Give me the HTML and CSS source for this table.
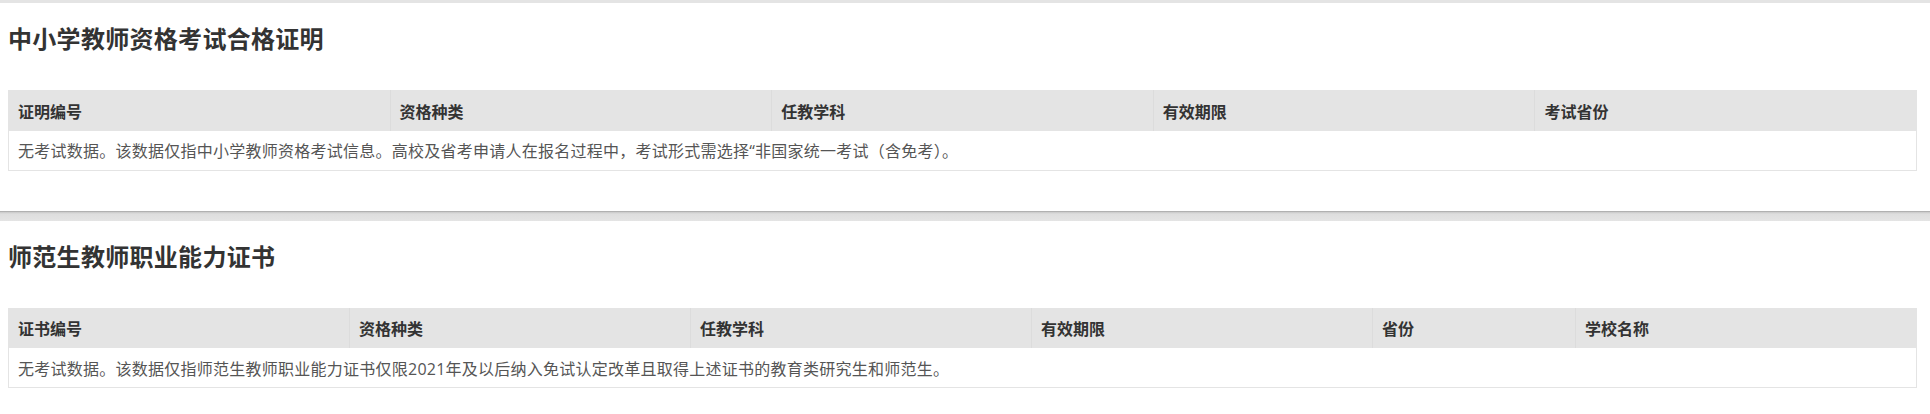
FILE: index.html
```html
<!DOCTYPE html>
<html lang="zh-CN">
<head>
    <meta charset="UTF-8">
    <meta name="viewport" content="width=device-width, initial-scale=1.0">
    <title>证书信息</title>
    <link rel="stylesheet" href="styles.css">
</head>
<body>
    <div class="band band-top"></div>

    <!-- 中小学教师资格考试 -->
    <div class="section">
        <h2 class="section-title">中小学教师资格考试合格证明</h2>
        <table class="cert-table">
            <thead>
                <tr>
                    <th class="col-five">证明编号</th>
                    <th class="col-five">资格种类</th>
                    <th class="col-five">任教学科</th>
                    <th class="col-five">有效期限</th>
                    <th class="col-five">考试省份</th>
                </tr>
            </thead>
            <tbody>
                <tr>
                    <td colspan="5">无考试数据。该数据仅指中小学教师资格考试信息。高校及省考申请人在报名过程中，考试形式需选择“非国家统一考试（含免考）。</td>
                </tr>
            </tbody>
        </table>
    </div>

    <div class="band"></div>

    <!-- 师范生教师职业能力证书 -->
    <div class="section">
        <h2 class="section-title">师范生教师职业能力证书</h2>
        <table class="cert-table">
            <thead>
                <tr>
                    <th class="col-wide">证书编号</th>
                    <th class="col-wide">资格种类</th>
                    <th class="col-wide">任教学科</th>
                    <th class="col-wide">有效期限</th>
                    <th class="col-narrow">省份</th>
                    <th>学校名称</th>
                </tr>
            </thead>
            <tbody>
                <tr>
                    <td colspan="6">无考试数据。该数据仅指师范生教师职业能力证书仅限2021年及以后纳入免试认定改革且取得上述证书的教育类研究生和师范生。</td>
                </tr>
            </tbody>
        </table>
    </div>
</body>
</html>
```

FILE: styles.css
```css
body {
    margin: 0;
    padding: 0;
    background: #fff;
    font-family: "Open Sans", "Noto Sans CJK SC", sans-serif;
    color: #333;
}

.band {
    height: 10px;
    background: linear-gradient(#9a9a9a 0, #c8c8c8 1px, #dedede 3px, #e4e4e4 10px);
}
.band-top {
    height: 3px;
    background: #e4e4e4;
}

.section {
    padding: 18px 13px 40px 8px;
    background: #fff;
}

.section-title {
    margin: 0 0 33px 0;
    font-size: 24px;
    line-height: 36px;
    font-weight: bold;
    letter-spacing: 0.3px;
    color: #333;
}

.cert-table {
    width: 100%;
    border-collapse: collapse;
    table-layout: fixed;
    border: 1px solid #e4e4e4;
}
.cert-table th {
    box-sizing: border-box;
    height: 40px;
    padding: 0 9px;
    background: #e4e4e4;
    border-left: 1px solid #dcdcdc;
    text-align: left;
    font-size: 16px;
    font-weight: bold;
    color: #333;
}
.cert-table th:first-child {
    border-left: none;
}
.cert-table td {
    height: 39px;
    padding: 0 9px;
    font-size: 16px;
    letter-spacing: 0.25px;
    color: #555;
    background: #fff;
}

.col-five {
    width: 20%;
}
.col-wide {
    width: 341px;
}
.col-narrow {
    width: 203px;
}
```
